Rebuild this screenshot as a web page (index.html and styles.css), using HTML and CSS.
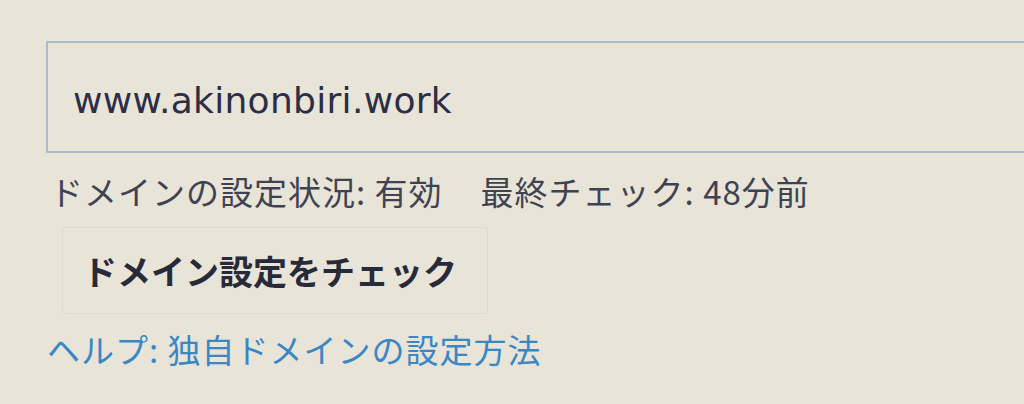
FILE: index.html
```html
<!DOCTYPE html>
<html lang="ja">
<head>
<meta charset="utf-8">
<link rel="stylesheet" href="styles.css">
<title>独自ドメイン</title>
</head>
<body>
<div class="panel">
  <div class="domain-field">www.akinonbiri.work</div>
  <p class="status"><span class="status-item">ドメインの設定状況: 有効</span><span class="status-item">最終チェック: 48分前</span></p>
  <div class="check-button">ドメイン設定をチェック</div>
  <a class="help-link" href="#">ヘルプ: 独自ドメインの設定方法</a>
</div>
</body>
</html>
```

FILE: styles.css
```css
html, body {
  margin: 0;
  padding: 0;
  background: #e8e4d8;
  overflow: hidden;
}

.panel {
  width: 1024px;
  height: 404px;
  padding: 41px 0 0 46px;
  box-sizing: border-box;
  display: flex;
  flex-direction: column;
  align-items: flex-start;
  font-family: "Noto Sans CJK JP", "Noto Sans", sans-serif;
  overflow: hidden;
}

.domain-field {
  width: 1100px;
  height: 112px;
  box-sizing: border-box;
  border: 2px solid #adbbcd;
  border-right: none;
  padding: 6px 0 0 25px;
  display: flex;
  align-items: center;
  font-family: "DejaVu Sans", "Noto Sans", sans-serif;
  font-size: 36px;
  color: #2b2e44;
  letter-spacing: 0.3px;
}

.status {
  margin: 18px 0 0 4px;
  height: 40px;
  line-height: 40px;
  font-size: 33px;
  color: #3f4351;
  letter-spacing: 1px;
  white-space: nowrap;
  display: flex;
  gap: 38px;
}

.check-button {
  margin: 16px 0 0 16px;
  width: 426px;
  height: 87px;
  box-sizing: border-box;
  border: 1px solid #dedacd;
  border-radius: 3px;
  padding-left: 20px;
  display: flex;
  align-items: center;
  font-size: 34px;
  font-weight: 700;
  color: #272a38;
  white-space: nowrap;
}

.help-link {
  margin: 15px 0 0 1px;
  height: 40px;
  line-height: 40px;
  font-size: 33px;
  letter-spacing: 1px;
  color: #3a87c6;
  text-decoration: none;
  white-space: nowrap;
}
```
